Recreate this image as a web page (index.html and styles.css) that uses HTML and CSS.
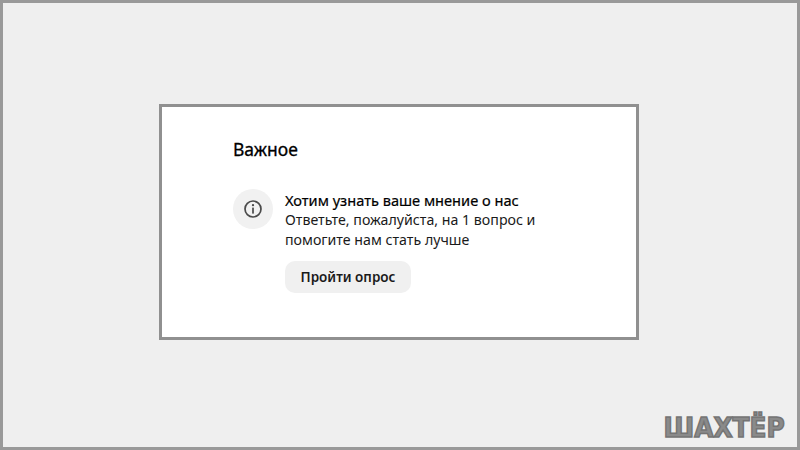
FILE: index.html
```html
<!DOCTYPE html>
<html lang="ru">
<head>
<meta charset="utf-8">
<title>Важное</title>
<link rel="stylesheet" href="styles.css">
</head>
<body>
<div class="frame">
  <section class="card">
    <h1 class="title">Важное</h1>
    <div class="notice">
      <div class="icon-wrap">
        <svg class="icon" viewBox="0 0 20 20" width="20" height="20" aria-hidden="true">
          <circle cx="10" cy="10" r="8" fill="none" stroke="#4a4a4a" stroke-width="1.7"/>
          <circle cx="10" cy="6.2" r="1.15" fill="#4a4a4a"/>
          <rect x="9.15" y="8.6" width="1.7" height="6" fill="#4a4a4a"/>
        </svg>
      </div>
      <div class="body">
        <div class="head">Хотим узнать ваше мнение о нас</div>
        <p class="text">Ответьте, пожалуйста, на 1 вопрос и<br>помогите нам стать лучше</p>
        <button class="btn">Пройти опрос</button>
      </div>
    </div>
  </section>
  <div class="logo">ШАХТЁР</div>
</div>
</body>
</html>
```

FILE: styles.css
```css
* { box-sizing: border-box; }
html, body { margin: 0; height: 100%; }
body { font-family: "Noto Sans", "Open Sans", sans-serif; color: #111; }
.frame {
  position: relative;
  width: 800px;
  height: 450px;
  background: #efefef;
  border: 3px solid #999;
  padding: 101px 0 0 156px;
}
.card {
  width: 480px;
  height: 236px;
  background: #fff;
  border: 3px solid #909090;
  padding: 30px 0 0 71px;
}
.title {
  margin: 0;
  font-size: 17.5px;
  line-height: 24px;
  font-weight: 400;
  -webkit-text-stroke: 0.3px #000;
  color: #000;
}
.notice { display: flex; gap: 12px; margin-top: 28px; }
.icon-wrap {
  width: 40px;
  height: 40px;
  border-radius: 50%;
  background: #f1f1f1;
  display: flex;
  align-items: center;
  justify-content: center;
}
.body { padding-top: 1px; }
.head { font-size: 14.6px; line-height: 20px; font-weight: 400; -webkit-text-stroke: 0.2px #000; color: #000; }
.text { margin: 0; font-size: 14.2px; line-height: 20px; color: #1a1a1a; }
.btn {
  display: block;
  margin-top: 11px;
  width: 126px;
  height: 32px;
  border: 0;
  border-radius: 10px;
  background: #f0f0f0;
  font-family: inherit;
  font-size: 13.5px;
  font-weight: 600;
  color: #1a1a1a;
  padding: 0;
}
.logo {
  position: absolute;
  right: 12px;
  bottom: 4px;
  font-family: "DejaVu Sans", sans-serif;
  font-weight: 700;
  font-size: 27px;
  line-height: 30px;
  color: #8a8a8a;
  -webkit-text-stroke: 1.5px #747474;
  transform: scaleX(0.92);
  transform-origin: right center;
}
```
